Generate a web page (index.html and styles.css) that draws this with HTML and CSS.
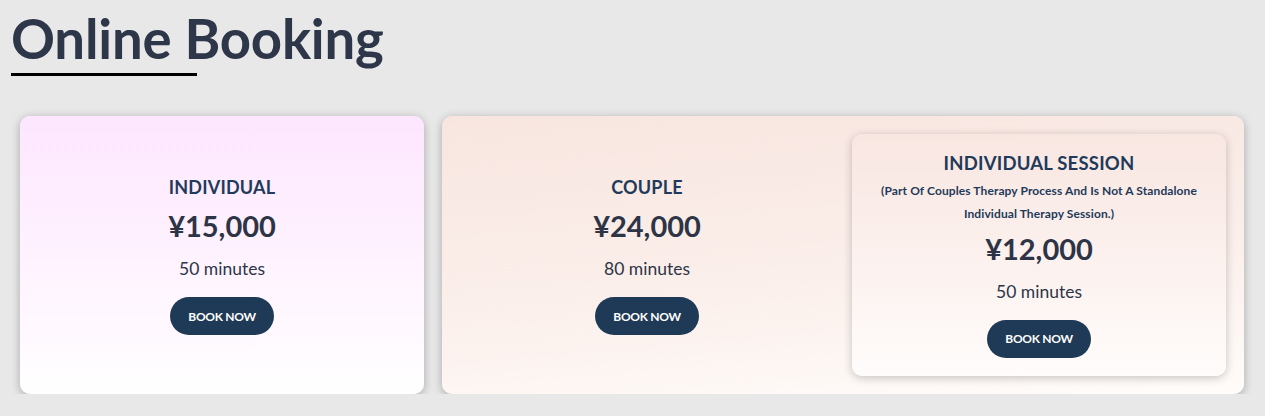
FILE: index.html
```html
<!DOCTYPE html>
<html lang="en">
<head>
<meta charset="utf-8">
<title>Online Booking</title>
<link rel="stylesheet" href="styles.css">
</head>
<body>
<main class="page">
  <h1 class="page-title">Online Booking</h1>
  <section class="plans">
    <article class="card card-pink">
      <div class="plan">
        <h2 class="plan-name">INDIVIDUAL</h2>
        <p class="plan-price">¥15,000</p>
        <p class="plan-time">50 minutes</p>
        <a class="btn" href="#">BOOK NOW</a>
      </div>
    </article>
    <article class="card card-peach card-split">
      <div class="plan">
        <h2 class="plan-name">COUPLE</h2>
        <p class="plan-price">¥24,000</p>
        <p class="plan-time">80 minutes</p>
        <a class="btn" href="#">BOOK NOW</a>
      </div>
      <div class="plan inner-card">
        <h2 class="plan-name plan-name-lg">INDIVIDUAL SESSION</h2>
        <p class="plan-note">(Part Of Couples Therapy Process And Is Not A Standalone Individual Therapy Session.)</p>
        <p class="plan-price plan-price-tight">¥12,000</p>
        <p class="plan-time">50 minutes</p>
        <a class="btn" href="#">BOOK NOW</a>
      </div>
    </article>
  </section>
</main>
</body>
</html>
```

FILE: styles.css
```css
* { box-sizing: border-box; }

html, body {
  margin: 0;
  padding: 0;
}

body {
  background: #e8e8e8;
  font-family: Lato, "Open Sans", sans-serif;
  color: #2d3446;
}

.page {
  padding: 5px 21px 0 11px;
}

.page-title {
  margin: 0;
  font-size: 54.5px;
  line-height: 67px;
  font-weight: 700;
  color: #2e3649;
  letter-spacing: -0.2px;
}

.page-title::after {
  content: "";
  display: block;
  width: 186px;
  height: 3px;
  margin-top: 1px;
  background: #000;
}

.plans {
  display: grid;
  grid-template-columns: 404px 1fr;
  gap: 18px;
  margin: 40px 0 0 9px;
}

.card {
  height: 278px;
  border-radius: 10px;
  box-shadow: 0 2px 10px rgba(0, 0, 0, 0.28);
}

.card-pink {
  display: flex;
  align-items: center;
  justify-content: center;
  background: linear-gradient(180deg, #fde6ff 0%, #fff7ff 70%, #ffffff 100%);
}

.card-peach {
  background: linear-gradient(175deg, #f8e5df 0%, #fbf0ec 60%, #fffcfa 100%);
}

.card-split {
  display: grid;
  grid-template-columns: 1fr 1fr;
  gap: 18px;
  padding: 18px;
}

.plan {
  display: flex;
  flex-direction: column;
  align-items: center;
  justify-content: center;
  text-align: center;
}

.inner-card {
  padding-bottom: 2px;
  border-radius: 10px;
  background: linear-gradient(180deg, #f8e6e1 0%, #fcf3f0 60%, #fffcfb 100%);
  box-shadow: 0 2px 10px rgba(0, 0, 0, 0.22);
}

.plan-name {
  margin: 0;
  font-size: 18px;
  line-height: 24px;
  font-weight: 700;
  color: #1f3a5a;
  letter-spacing: 0.2px;
}

.plan-name-lg {
  font-size: 18.5px;
}

.plan-note {
  margin: 4px 0 0;
  padding: 0 20px;
  font-size: 12px;
  line-height: 23px;
  font-weight: 700;
  color: #1f3a5a;
  letter-spacing: 0.1px;
}

.plan-price {
  margin: 10px 0 0;
  font-size: 29px;
  line-height: 34px;
  font-weight: 700;
  color: #2d3446;
}

.plan-price-tight {
  margin-top: 7px;
}

.plan-time {
  margin: 14px 0 0;
  font-size: 17.5px;
  line-height: 24px;
  font-weight: 400;
  color: #2d3446;
}

.btn {
  display: inline-flex;
  align-items: center;
  justify-content: center;
  margin-top: 16px;
  height: 38px;
  padding: 0 18px;
  border-radius: 19px;
  background: #1f3a56;
  color: #ffffff;
  font-size: 12px;
  font-weight: 700;
  letter-spacing: -0.3px;
  text-decoration: none;
}
```
